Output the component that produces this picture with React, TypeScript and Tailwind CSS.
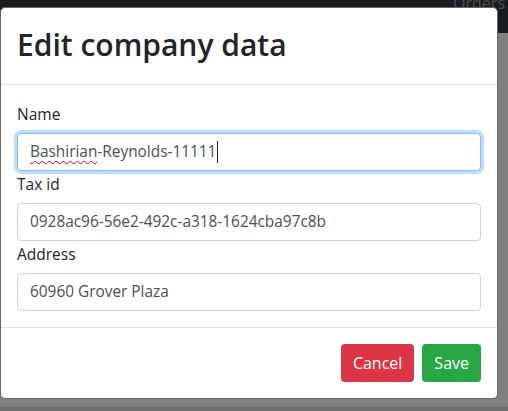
import React from "react";

const font = { fontFamily: '"Open Sans", "Noto Sans", sans-serif' };

function Field({ label, value, focused }: { label: string; value: React.ReactNode; focused?: boolean }) {
  return (
    <div>
      <div className="mb-2 pt-[2px] text-[15.5px] leading-[22px] text-[#212529]">{label}</div>
      <div
        className={
          "flex h-[38px] items-center rounded-[4px] border px-3 text-[15.4px] text-[#495057] " +
          (focused
            ? "border-[#80bdff] shadow-[0_0_0_3px_rgba(0,123,255,0.25)]"
            : "border-[#ced4da]")
        }
      >
        {value}
      </div>
    </div>
  );
}

export default function App() {
  return (
    <div className="relative h-[411px] w-[508px] overflow-hidden bg-[#808080]" style={font}>
      {/* navbar under backdrop */}
      <div className="flex h-[33px] items-start justify-end bg-[#1a1c1e] pr-[3px]">
        <span className="-mt-[9px] text-[16px] text-[#4b4e51]">Orders</span>
      </div>
      <div className="absolute bottom-0 left-0 right-0 h-[4px] bg-[#6f6f6f]" />

      {/* modal */}
      <div className="absolute left-0 top-[7px] w-[498px] rounded-[5px] border border-[#666] bg-white">
        <div className="border-b border-[#dee2e6] px-4 pt-[14px] pb-[16px]">
          <h1 className="text-[30px] font-semibold leading-[46px] text-[#222529]">Edit company data</h1>
        </div>
        <div className="p-4">
          <Field
            label="Name"
            focused
            value={
              <span className="flex items-center">
                <span className="underline decoration-red-600 decoration-wavy decoration-1 underline-offset-[3px]">Bashirian</span>
                <span>-Reynolds-11111</span>
                <span className="ml-px h-[22px] w-px bg-[#222]" />
              </span>
            }
          />
          <Field label="Tax id" value="0928ac96-56e2-492c-a318-1624cba97c8b" />
          <Field label="Address" value="60960 Grover Plaza" />
        </div>
        <div className="flex justify-end gap-2 border-t border-[#dee2e6] p-4">
          <button className="h-[38px] rounded-[4px] bg-[#dc3545] px-3 text-[16px] text-white">Cancel</button>
          <button className="h-[38px] rounded-[4px] bg-[#28a745] px-3 text-[16px] text-white">Save</button>
        </div>
      </div>
    </div>
  );
}
